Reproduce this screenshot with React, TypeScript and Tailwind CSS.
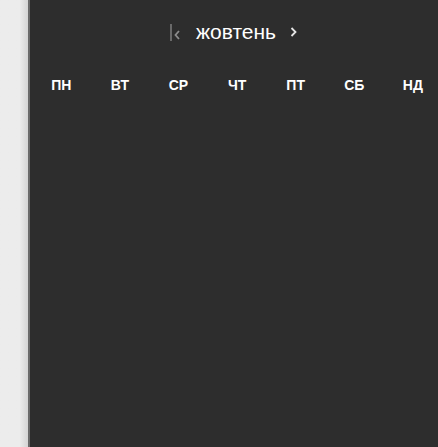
import React from 'react';

const days = ['ПН', 'ВТ', 'СР', 'ЧТ', 'ПТ', 'СБ', 'НД'];

const App: React.FC = () => {
    return (
        <div className="flex h-[447px] w-[438px] overflow-hidden bg-[#ececec] font-['Liberation_Sans',Arial,sans-serif]">
            <div className="w-[28px] shrink-0 bg-gradient-to-r from-[#ececec] from-70% to-[#d4d4d4]" />
            <div className="flex min-w-0 flex-1 flex-col border-l-2 border-[#6a6a6a] bg-[#2d2d2d]">
                {/* Month header */}
                <div className="mt-[20px] flex h-6 items-center justify-center">
                    <svg width="12" height="18" viewBox="0 0 12 18" className="mr-[14px]">
                        <line x1="1" y1="1" x2="1" y2="18" stroke="#8c8c8c" strokeWidth="1.3" />
                        <polyline points="9,8 5.5,12 9,16" fill="none" stroke="#8c8c8c" strokeWidth="1.8" />
                    </svg>
                    <span className="text-[21px] leading-6 text-white">жовтень</span>
                    <svg width="8" height="12" viewBox="0 0 8 12" className="ml-[14px]">
                        <polyline points="1.5,2 5.5,6 1.5,10" fill="none" stroke="#e6e6e6" strokeWidth="1.8" />
                    </svg>
                </div>

                {/* Weekdays */}
                <div className="mt-[33px] grid grid-cols-[repeat(7,58.6px)] pl-[2px]">
                    {days.map((d) => (
                        <div key={d} className="text-center text-[14px] font-bold leading-4 text-white">
                            {d}
                        </div>
                    ))}
                </div>
            </div>
        </div>
    );
};

export default App;
